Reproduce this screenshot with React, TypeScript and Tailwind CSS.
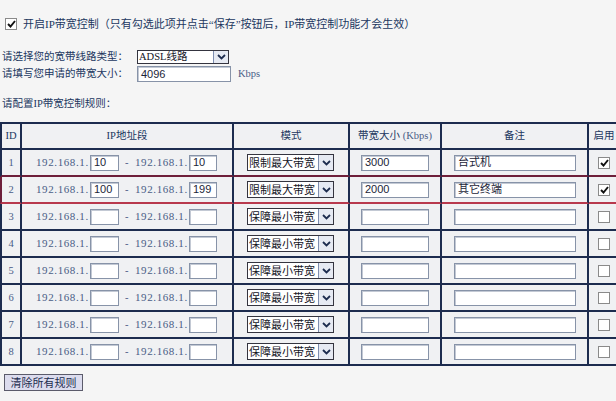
import React from "react";

type Rule = {
  id: number;
  from: string;
  to: string;
  mode: string;
  bw: string;
  note: string;
  on: boolean;
};

const rules: Rule[] = [
  { id: 1, from: "10", to: "10", mode: "限制最大带宽", bw: "3000", note: "台式机", on: true },
  { id: 2, from: "100", to: "199", mode: "限制最大带宽", bw: "2000", note: "其它终端", on: true },
  ...[3, 4, 5, 6, 7, 8].map((id) => ({
    id,
    from: "",
    to: "",
    mode: "保障最小带宽",
    bw: "",
    note: "",
    on: false,
  })),
];

const Chevron = () => (
  <svg width="9" height="6" viewBox="0 0 9 6">
    <path d="M1 1L4.5 4.5L8 1" fill="none" stroke="#1d2c4f" strokeWidth="1.8" />
  </svg>
);

const CheckBox = ({ checked }: { checked: boolean }) => (
  <span className="flex h-[12px] w-[12px] items-center justify-center border border-[#8a8a8a] bg-white">
    {checked && (
      <svg width="9" height="8" viewBox="0 0 9 8">
        <path d="M1 4L3.5 6.5L8 1" fill="none" stroke="#111" strokeWidth="1.9" />
      </svg>
    )}
  </span>
);

const Field = ({ value, className }: { value: string; className: string }) => (
  <div
    className={`flex items-center border border-[#8793a8] bg-white pl-[3px] font-['Liberation_Sans','Noto_Sans_CJK_SC',sans-serif] text-[11px] text-[#1c2538] shadow-[inset_1px_1px_0_#c3c9d4] ${className}`}
  >
    {value}
  </div>
);

const Select = ({ value, className, text }: { value: string; className: string; text: string }) => (
  <div className={`flex items-stretch border border-[#34343f] bg-white ${className}`}>
    <span className={`flex min-w-0 flex-1 items-center overflow-hidden whitespace-nowrap pl-[1px] text-[#15151f] ${text}`}>
      {value}
    </span>
    <span className="flex w-[15px] shrink-0 items-center justify-center border-l border-[#7d8db0] bg-[#e6eaf3]">
      <Chevron />
    </span>
  </div>
);

const IpLabel = () => (
  <span className="w-[54px] font-['Liberation_Serif',serif] text-[11px] tracking-[0.6px] text-[#4a5c86]">
    192.168.1.
  </span>
);

const head = "border-r-2 border-b-2 border-t-2 border-[#1d2c4f] font-normal";

export default function App() {
  return (
    <div className="h-[401px] w-[616px] overflow-hidden bg-[#f5f5f5] font-['Liberation_Serif','Noto_Sans_CJK_SC',serif] text-[10.5px] text-[#22375f]">
      {/* 开启开关 */}
      <div className="mt-[18px] flex h-[12px] items-center pl-[5px]">
        <CheckBox checked />
        <span className="ml-[6px] whitespace-nowrap text-[11px]">
          开启IP带宽控制（只有勾选此项并点击“保存”按钮后，IP带宽控制功能才会生效）
        </span>
      </div>

      <div className="mt-[20px] flex h-[14px] items-center">
        <span className="w-[137px] pl-[2px]">请选择您的宽带线路类型：</span>
        <Select value="ADSL线路" className="h-[14px] w-[92px]" text="text-[10.5px]" />
      </div>
      <div className="mt-[2px] flex h-[16px] items-center">
        <span className="w-[137px] pl-[2px]">请填写您申请的带宽大小：</span>
        <Field value="4096" className="h-[16px] w-[94px]" />
        <span className="ml-[7px] text-[#4a5c86]">Kbps</span>
      </div>

      <div className="mt-[15px] flex h-[14px] items-center pl-[2px]">请配置IP带宽控制规则：</div>

      <table className="mt-[11px] w-[621px] table-fixed border-separate border-spacing-0 bg-[#f0f1f3]">
        <colgroup>
          <col className="w-[22px]" />
          <col className="w-[212px]" />
          <col className="w-[116px]" />
          <col className="w-[92px]" />
          <col className="w-[147px]" />
          <col className="w-[32px]" />
        </colgroup>
        <thead>
          <tr className="h-[28px]">
            <th className={`${head} border-l-2`}>ID</th>
            <th className={head}>IP地址段</th>
            <th className={head}>模式</th>
            <th className={`${head} whitespace-nowrap`}>
              带宽大小 <span className="text-[#4a5c86]">(Kbps)</span>
            </th>
            <th className={head}>备注</th>
            <th className={`${head} whitespace-nowrap`}>启用</th>
          </tr>
        </thead>
        <tbody>
          {rules.map((r) => {
            // 第1、2行之间和第2行底边用深红色框出当前行
            const bottom = r.id === 1 ? "border-b-[#6e1f3a]" : r.id === 2 ? "border-b-[#b8394d]" : "border-b-[#1d2c4f]";
            const cell = `h-[27px] border-r-2 border-b-2 border-r-[#1d2c4f] ${bottom} p-0`;
            return (
              <tr key={r.id}>
                <td
                  className={`${cell} border-l-2 text-center text-[#4a5c86] ${r.id === 2 ? "border-l-[#6e1f3a]" : "border-l-[#1d2c4f]"}`}
                >
                  {r.id}
                </td>
                <td className={cell}>
                  <div className="flex items-center pl-[14px]">
                    <IpLabel />
                    <Field value={r.from} className="h-[16px] w-[29px]" />
                    <span className="ml-[6px] w-[10px] text-[#4a5c86]">-</span>
                    <IpLabel />
                    <Field value={r.to} className="h-[16px] w-[28px]" />
                  </div>
                </td>
                <td className={cell}>
                  <div className="pl-[13px]">
                    <Select value={r.mode} className="h-[17px] w-[87px]" text="font-['Noto_Sans_CJK_SC',sans-serif] text-[11px] leading-none" />
                  </div>
                </td>
                <td className={cell}>
                  <div className="pl-[11px]">
                    <Field value={r.bw} className="h-[16px] w-[68px]" />
                  </div>
                </td>
                <td className={cell}>
                  <div className="pl-[12px]">
                    <Field value={r.note} className="h-[16px] w-[122px]" />
                  </div>
                </td>
                <td className={cell}>
                  <div className="flex justify-center">
                    <CheckBox checked={r.on} />
                  </div>
                </td>
              </tr>
            );
          })}
        </tbody>
      </table>

      <div className="mt-[8px] pl-[4px]">
        <button className="flex h-[17px] w-[79px] items-center justify-center border border-[#5b5b6b] bg-[#dcdcee] font-['Noto_Sans_CJK_SC',sans-serif] text-[11px] text-[#1d2c4f]">
          清除所有规则
        </button>
      </div>
    </div>
  );
}
